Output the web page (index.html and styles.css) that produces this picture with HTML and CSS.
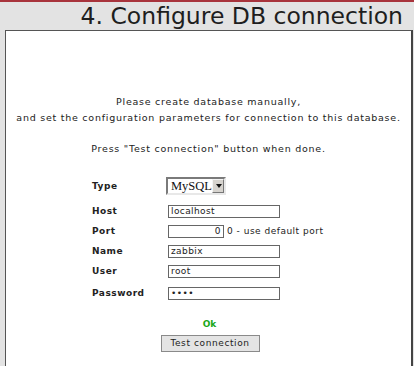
FILE: index.html
```html
<!DOCTYPE html>
<html lang="en">
<head>
    <meta charset="UTF-8">
    <meta name="viewport" content="width=device-width, initial-scale=1.0">
    <title>Installation - Configure DB connection</title>
    <link rel="stylesheet" href="styles.css">
</head>
<body>
    <div class="install-frame">
        <h1 class="step-title">4. Configure DB connection</h1>

        <div class="step-body">
            <p class="note">Please create database manually,<br>and set the configuration parameters for connection to this database.</p>
            <p class="note note-press">Press "Test connection" button when done.</p>

            <form class="db-form" id="dbForm">
                <div class="form-row row-type">
                    <label for="dbType">Type</label>
                    <div class="fake-select" id="dbType">
                        <span class="fake-select-value">MySQL</span>
                        <span class="fake-select-arrow"></span>
                    </div>
                </div>

                <div class="form-row row-first">
                    <label for="dbHost">Host</label>
                    <input type="text" id="dbHost" class="field" value="localhost">
                </div>

                <div class="form-row">
                    <label for="dbPort">Port</label>
                    <input type="text" id="dbPort" class="field field-port" value="0">
                    <span class="hint">0 - use default port</span>
                </div>

                <div class="form-row">
                    <label for="dbName">Name</label>
                    <input type="text" id="dbName" class="field" value="zabbix">
                </div>

                <div class="form-row">
                    <label for="dbUser">User</label>
                    <input type="text" id="dbUser" class="field" value="root">
                </div>

                <div class="form-row row-last">
                    <label for="dbPass">Password</label>
                    <input type="password" id="dbPass" class="field" value="1234">
                </div>

                <div class="status-ok">Ok</div>
                <div class="actions">
                    <button type="button" class="test-button">Test connection</button>
                </div>
            </form>
        </div>
    </div>
</body>
</html>
```

FILE: styles.css
```css
* {
    margin: 0;
    padding: 0;
    box-sizing: border-box;
}

body {
    font-family: 'DejaVu Sans', Verdana, sans-serif;
    background: #e3e3e3;
    color: #222;
    height: 366px;
    overflow: hidden;
}

.install-frame {
    border-top: 2px solid #a8343c;
    padding: 0 1px 0 5px;
}

.step-title {
    font-weight: normal;
    font-size: 23.5px;
    line-height: 28px;
    text-align: right;
    padding-right: 10px;
    color: #1e1e1e;
    height: 28px;
}

.step-body {
    background: #fff;
    border: 1px solid #555;
    border-right: 2px solid #444;
    border-bottom: none;
    min-height: 340px;
    padding-top: 63px;
}

.note {
    font-size: 9.5px;
    line-height: 16px;
    letter-spacing: 0.75px;
    text-align: center;
    color: #222;
}

.note-press {
    margin-top: 15px;
}

.db-form {
    margin-top: 17px;
}

.form-row {
    display: flex;
    align-items: center;
    height: 20px;
    padding-left: 86px;
}

.form-row label {
    width: 76px;
    font-size: 9px;
    font-weight: bold;
    letter-spacing: 0.5px;
    color: #222;
}

.row-type {
    height: 24px;
}

.row-first {
    margin-top: 3px;
}

.row-last {
    margin-top: 2px;
}

.fake-select {
    display: flex;
    align-items: stretch;
    height: 18px;
    width: 60px;
    margin-left: -2px;
    border: 2px solid;
    border-color: #7a7a7a #e8e8e8 #e8e8e8 #7a7a7a;
    background: #fff;
}

.fake-select-value {
    flex: 1;
    font-family: 'Liberation Serif', serif;
    font-size: 12.5px;
    line-height: 14px;
    padding-left: 3px;
    color: #111;
}

.fake-select-arrow {
    width: 15px;
    background: #d6d3ce;
    border: 1px solid;
    border-color: #f4f4f4 #777 #777 #f4f4f4;
    position: relative;
}

.fake-select-arrow::after {
    content: "";
    position: absolute;
    left: 3px;
    top: 4px;
    border-left: 3.5px solid transparent;
    border-right: 3.5px solid transparent;
    border-top: 4px solid #111;
}

.field {
    width: 112px;
    height: 13px;
    border: 1px solid #666;
    font-family: 'DejaVu Sans', sans-serif;
    font-size: 9px;
    letter-spacing: 0.4px;
    padding: 0 2px;
    color: #222;
    outline: none;
}

.field-port {
    width: 56px;
    text-align: right;
}

.hint {
    font-size: 9px;
    letter-spacing: 0.5px;
    margin-left: 3px;
    white-space: nowrap;
}

.status-ok {
    margin-top: 16px;
    text-align: center;
    font-size: 9px;
    font-weight: bold;
    color: #1aa81a;
    line-height: 11px;
    padding-left: 2px;
}

.actions {
    text-align: center;
    margin-top: 1px;
}

.test-button {
    font-family: 'DejaVu Sans', sans-serif;
    font-size: 9px;
    letter-spacing: 0.6px;
    width: 99px;
    height: 17px;
    background: #e4e4e4;
    border: 1px solid #8a8a8a;
    color: #222;
    margin-left: 3px;
}
```
